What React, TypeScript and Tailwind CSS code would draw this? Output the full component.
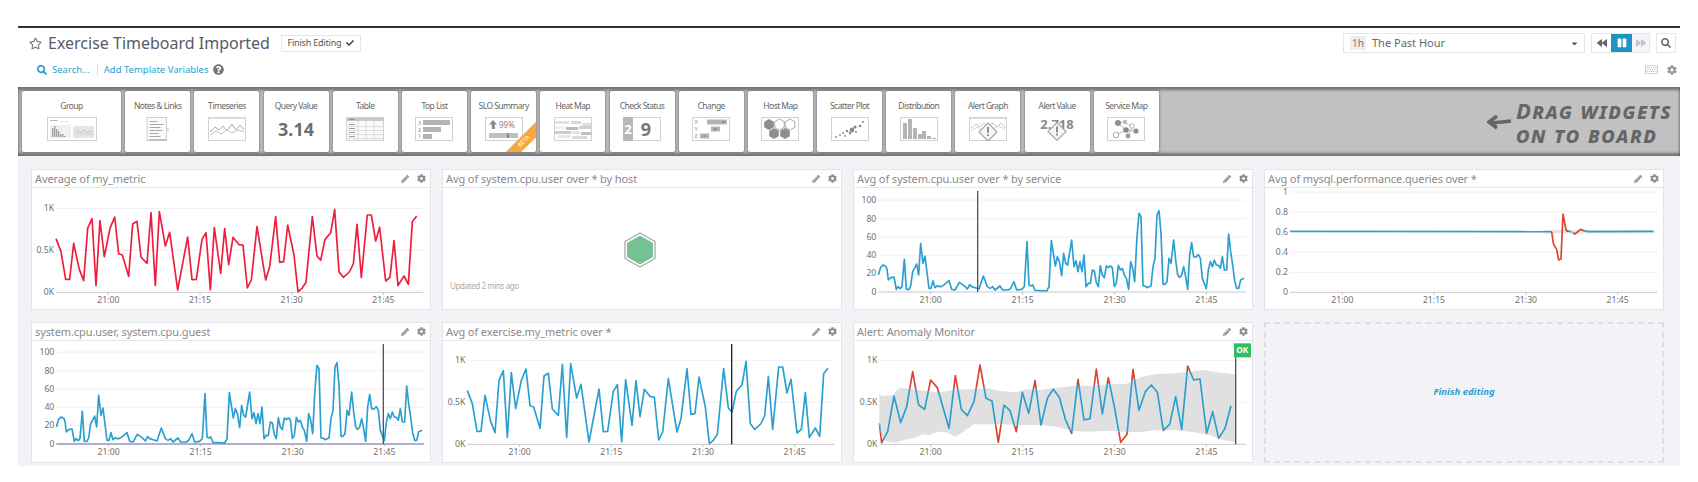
import React from "react";
import {
  FaBackward,
  FaCaretDown,
  FaCheck,
  FaCog,
  FaForward,
  FaPause,
  FaPencilAlt,
  FaQuestionCircle,
  FaRegKeyboard,
  FaRegStar,
  FaSearch,
} from "react-icons/fa";

type Pt = [number, number];

const toPoints = (pts: Pt[]) => pts.map((p) => p.join(",")).join(" ");

// traced off the reference, coordinates are 3x real pixels
const METRIC: Pt[] = [
  [168, 236], [183, 275], [197, 358], [209, 358], [221, 250], [238, 328], [251, 362], [263, 205], [276, 176], [288, 376],
  [300, 182], [313, 290], [330, 205], [344, 171], [356, 281], [367, 285], [386, 349], [398, 192], [411, 184], [423, 291],
  [441, 310], [453, 158], [466, 376], [478, 155], [496, 258], [509, 217], [533, 390], [563, 231], [576, 359], [589, 358],
  [606, 238], [618, 218], [631, 390], [643, 203], [662, 340], [674, 206], [686, 314], [699, 232], [717, 254], [729, 255],
  [742, 384], [754, 360], [771, 200], [797, 360], [809, 320], [827, 170], [839, 307], [851, 305], [863, 195], [882, 285],
  [894, 395], [906, 385], [918, 367], [937, 170], [951, 288], [962, 301], [975, 238], [992, 219], [1004, 148], [1017, 335],
  [1030, 352], [1048, 336], [1060, 312], [1071, 193], [1084, 352], [1102, 165], [1114, 165], [1127, 243], [1139, 202],
  [1157, 363], [1170, 352], [1182, 242], [1194, 377], [1212, 348], [1225, 373], [1237, 185], [1250, 168],
];

const CPU: Pt[] = [
  [115, 345], [122, 322], [130, 315], [138, 320], [141, 328], [145, 360], [152, 353], [162, 351], [169, 388], [174, 380],
  [180, 386], [186, 380], [193, 298], [199, 388], [207, 388], [212, 378], [218, 335], [225, 322], [230, 312], [236, 345],
  [242, 250], [249, 310], [255, 288], [262, 345], [267, 385], [273, 385], [279, 362], [285, 383], [292, 377], [298, 380],
  [305, 379], [313, 374], [327, 362], [335, 388], [345, 390], [358, 367], [372, 377], [382, 387], [389, 374], [395, 380],
  [408, 384], [417, 387], [430, 348], [442, 380], [450, 385], [458, 380], [465, 390], [480, 378], [488, 390], [505, 390],
  [512, 385], [522, 365], [530, 390], [545, 388], [553, 380], [561, 245], [567, 375], [573, 378], [578, 375], [585, 391],
  [620, 393], [627, 380], [634, 242], [640, 280], [646, 318], [652, 290], [658, 305], [665, 347], [671, 280], [677, 310],
  [683, 315], [695, 240], [702, 320], [708, 302], [714, 335], [720, 305], [726, 335], [732, 285], [738, 380], [745, 370],
  [751, 370], [757, 330], [763, 333], [769, 368], [775, 380], [781, 317], [787, 345], [793, 353], [799, 318], [805, 323],
  [811, 318], [817, 323], [823, 380], [829, 370], [835, 316], [841, 330], [847, 325], [853, 345], [859, 355], [866, 388],
  [872, 305], [878, 325], [884, 365], [891, 230], [897, 160], [903, 170], [909, 378], [915, 378], [921, 383], [933, 378],
  [939, 320], [945, 295], [951, 165], [957, 152], [963, 220], [969, 373], [975, 373], [981, 365], [987, 295], [993, 310],
  [1001, 240], [1007, 300], [1013, 345], [1019, 352], [1025, 345], [1031, 320], [1037, 350], [1043, 388], [1049, 285],
  [1055, 248], [1061, 290], [1067, 292], [1075, 284], [1081, 295], [1087, 355], [1099, 386], [1105, 330], [1111, 305],
  [1117, 320], [1123, 300], [1129, 315], [1135, 316], [1141, 325], [1147, 290], [1153, 330], [1160, 330], [1166, 222],
  [1172, 275], [1178, 315], [1184, 362], [1190, 385], [1196, 385], [1202, 360], [1212, 355],
];

const ANOMALY: Pt[] = [
  [118, 325], [125, 383], [143, 350], [162, 243], [182, 323], [200, 275], [218, 170], [236, 270], [254, 283], [272, 195],
  [292, 218], [327, 340], [346, 182], [364, 283], [382, 302], [402, 260], [420, 150], [438, 250], [456, 258], [475, 382],
  [492, 270], [510, 287], [529, 350], [547, 232], [566, 295], [585, 197], [603, 330], [622, 250], [640, 223], [658, 247],
  [676, 313], [695, 355], [714, 193], [732, 315], [750, 311], [769, 162], [787, 297], [805, 188], [824, 280], [842, 382],
  [861, 358], [879, 163], [897, 286], [916, 230], [934, 210], [952, 232], [970, 346], [989, 328], [1007, 245], [1025, 343],
  [1043, 153], [1061, 195], [1080, 192], [1100, 355], [1118, 290], [1136, 370], [1155, 340], [1173, 272],
];

const BAND: Pt[] = [
  [118, 233], [125, 243], [160, 240], [170, 225], [180, 218], [215, 222], [260, 228], [300, 232], [340, 225], [390, 222],
  [440, 220], [480, 228], [530, 232], [560, 222], [600, 225], [650, 218], [700, 213], [760, 212], [800, 208], [860, 207],
  [900, 187], [950, 177], [1000, 175], [1050, 170], [1090, 165], [1130, 172], [1187, 178], [1187, 382], [1150, 375],
  [1100, 358], [1050, 350], [1000, 345], [950, 345], [900, 352], [850, 350], [800, 347], [750, 350], [700, 348], [650, 335],
  [600, 330], [540, 330], [480, 328], [440, 328], [400, 328], [370, 350], [345, 365], [320, 352], [290, 350], [270, 360],
  [250, 358], [220, 370], [190, 375], [170, 383], [140, 380], [125, 365], [118, 330],
];

const BAND_PATH = `M${BAND.map((p) => p.join(" ")).join("L")}Z`;

const RED_MYSQL: Pt[] = [
  [875, 215], [880, 250], [885, 260], [890, 268], [896, 300], [903, 296], [909, 162], [918, 210], [925, 215],
];
const RED_MYSQL_2: Pt[] = [[938, 218], [945, 222], [962, 208], [970, 212]];

interface AxisProps {
  origin: Pt;
  left: number;
  right: number;
  ticks: number[];
  yLabels: [string, number][];
  baseY: number;
  children: React.ReactNode;
}

const Chart = ({ origin, left, right, ticks, yLabels, baseY, children }: AxisProps) => {
  return (
    <svg
      viewBox={`${origin[0]} ${origin[1]} 1194 363`}
      className="block h-[121px] w-[398px] overflow-visible"
      fontFamily="'Noto Sans', sans-serif"
      fontSize="26"
      fill="#707070"
    >
      {yLabels.map(([label, y]) => (
        <g key={label}>
          {y !== baseY && <line x1={left} x2={right} y1={y} y2={y} stroke="#f0f0f2" strokeWidth="3" />}
          <text x={left - 6} y={y + 9} textAnchor="end">
            {label}
          </text>
        </g>
      ))}
      <line x1={left} x2={right} y1={baseY} y2={baseY} stroke="#c8c8cc" strokeWidth="3" />
      {ticks.map((x, i) => (
        <g key={x}>
          <line x1={x} x2={x} y1={baseY} y2={baseY + 7} stroke="#bbb" strokeWidth="3" />
          <text x={x} y={baseY + 33} textAnchor="middle">
            {["21:00", "21:15", "21:30", "21:45"][i]}
          </text>
        </g>
      ))}
      {children}
    </svg>
  );
};

const Line = ({ pts, color }: { pts: Pt[]; color: string }) => (
  <polyline points={toPoints(pts)} fill="none" stroke={color} strokeWidth="5" strokeLinejoin="round" />
);

const Cursor = ({ x, y1, y2, color = "#555" }: { x: number; y1: number; y2: number; color?: string }) => (
  <line x1={x} x2={x} y1={y1} y2={y2} stroke={color} strokeWidth="4" />
);

const Panel = ({ title, children }: { title: string; children: React.ReactNode }) => {
  return (
    <div className="h-[141px] border border-[#e3e3e8] bg-white">
      <div className="flex h-[18px] items-center justify-between border-b border-[#e6e6ea] pl-[3px] pr-[4px]">
        <span className="text-[11px] leading-[17px] tracking-[-0.1px] text-[#8a8a8a]">{title}</span>
        <div className="flex items-center gap-[8px] text-[#8c8c8c]">
          <FaPencilAlt className="h-[8px] w-[8px]" />
          <FaCog className="h-[9px] w-[9px]" />
        </div>
      </div>
      {children}
    </div>
  );
};

const K_LABELS: [string, number][] = [
  ["1K", 145],
  ["0.5K", 271],
  ["0K", 397],
];
const K_LABELS_ALERT: [string, number][] = [
  ["1K", 136],
  ["0.5K", 262],
  ["0K", 388],
];
const PCT_LABELS: [string, number][] = [
  ["100", 120],
  ["80", 176],
  ["60", 231],
  ["40", 286],
  ["20", 340],
  ["0", 396],
];

const G = "#b4b4b4";
const FRAME = "#d2d2d2";

const Box = ({ children, w = 38 }: { children: React.ReactNode; w?: number }) => (
  <svg viewBox={`0 0 ${w} 24`} width={w} height={24} fontFamily="'Noto Sans', sans-serif">
    {children}
  </svg>
);

const Frame = ({ w = 38 }: { w?: number }) => (
  <rect x="0.5" y="0.5" width={w - 1} height="23" fill="#fff" stroke={FRAME} />
);

const Diamond = ({ cx, cy }: { cx: number; cy: number }) => (
  <g>
    <polygon
      points={`${cx},${cy - 9} ${cx + 9},${cy} ${cx},${cy + 9} ${cx - 9},${cy}`}
      fill="#f6f6f6"
      stroke="#a8a8a8"
      strokeWidth="1.2"
    />
    <rect x={cx - 0.8} y={cy - 5} width="1.6" height="6" fill="#777" />
    <rect x={cx - 0.8} y={cy + 2.2} width="1.6" height="1.8" fill="#777" />
  </g>
);

const hexPoints = (cx: number, cy: number, r: number) =>
  [0, 1, 2, 3, 4, 5]
    .map((i) => {
      const a = (Math.PI / 3) * i + Math.PI / 6;
      return `${(cx + r * Math.cos(a)).toFixed(1)},${(cy + r * Math.sin(a)).toFixed(1)}`;
    })
    .join(" ");

const GroupIcon = () => (
  <Box w={50}>
    <Frame w={50} />
    <rect x="3" y="3" width="8" height="1" fill="#bbb" />
    <rect x="13" y="4" width="8" height="0.8" fill="#ddd" />
    <rect x="3" y="8" width="21" height="13" fill="#f0f0f0" />
    <rect x="26" y="9" width="21" height="12" fill="#e6e6e6" />
    {[[5, 9], [7, 11], [9, 8], [11, 6], [13, 3], [15, 3], [17, 1]].map(([x, h]) => (
      <rect key={x} x={x} y={20 - h} width="1.4" height={h} fill="#a2a2a2" />
    ))}
    <polyline points="28,16 31,13 34,16 37,13 40,16 43,14 46,15" fill="none" stroke="#c2c2c2" />
    <polyline points="28,18 31,16 34,18 37,16 40,18 43,17 46,17" fill="none" stroke="#cfcfcf" />
  </Box>
);

const NotesIcon = () => (
  <Box w={24}>
    <rect x="1" y="0.5" width="19.5" height="23" fill="#fafafa" stroke="#cfcfcf" />
    <rect x="3" y="22" width="18" height="1.5" fill="#bbb" />
    <polygon points="20.5,11 23,12.5 20.5,14" fill="#fff" stroke="#bbb" strokeWidth="0.7" />
    {[[4, 8], [7, 14], [10, 11], [13, 13], [16, 9], [19, 11]].map(([y, w]) => (
      <rect key={y} x="3.5" y={y} width={w} height="1" fill="#a9a9a9" />
    ))}
  </Box>
);

const TimeseriesIcon = () => (
  <Box>
    <Frame />
    <rect x="0.5" y="0.5" width="37" height="1.5" fill="#ddd" />
    <polyline points="2,15 7,10 11,13 15,9 19,14 24,7 28,13 32,8 36,13" fill="none" stroke="#aaa" />
    <polyline points="2,18 8,14 13,17 19,13 24,16 30,13 36,15" fill="none" stroke="#c2c2c2" />
  </Box>
);

const TableIcon = () => (
  <Box>
    <rect x="0.5" y="0.5" width="37" height="23" fill="#fafafa" stroke={FRAME} />
    <rect x="1" y="1" width="36" height="3" fill="#c8c8c8" />
    <rect x="3" y="1.8" width="6" height="1" fill="#888" />
    {[8, 12, 16, 20].map((y) => (
      <g key={y}>
        <rect x="3" y={y - 1} width="6" height="1" fill="#9c9c9c" />
        <line x1="1" x2="37" y1={y + 1.5} y2={y + 1.5} stroke="#dcdcdc" />
      </g>
    ))}
    {[12, 20, 28].map((x) => (
      <line key={x} x1={x} x2={x} y1="4" y2="23" stroke="#dcdcdc" />
    ))}
  </Box>
);

const TopListIcon = () => (
  <Box>
    <Frame />
    <g fontSize="5.5" fill="#888">
      <text x="3" y="7.5">3</text>
      <text x="3" y="14.5">2</text>
      <text x="3" y="21">1</text>
    </g>
    <rect x="8" y="3" width="27" height="5" fill={G} />
    <rect x="8" y="10" width="18" height="5" fill={G} />
    <rect x="8" y="17" width="9" height="5" fill={G} />
  </Box>
);

const SloIcon = () => (
  <Box>
    <Frame />
    <polygon points="6,3 10,7.5 7.8,7.5 7.8,12 4.8,12 4.8,7.5 2,7.5" fill="#8a8a8a" transform="translate(2 0)" />
    <text x="14" y="11" fontSize="8" fill="#888">99%</text>
    <rect x="4" y="16" width="29" height="5" fill="#c0c0c0" />
    <rect x="22" y="16" width="1.5" height="5" fill="#777" />
  </Box>
);

const HeatIcon = () => (
  <Box>
    <Frame />
    {[[1, 4, 14, "#e2e2e2"], [17, 4, 10, "#d6d6d6"], [28, 6, 9, "#ddd"], [1, 9, 10, "#eee"], [12, 10, 12, "#bbb"], [25, 9, 12, "#d0d0d0"], [1, 14, 16, "#ccc"], [18, 14, 8, "#e4e4e4"], [27, 15, 10, "#bfbfbf"], [4, 18, 12, "#e6e6e6"], [18, 19, 15, "#dadada"]].map(([x, y, w, c], i) => (
      <rect key={i} x={x as number} y={y as number} width={w as number} height="3" fill={c as string} />
    ))}
  </Box>
);

const CheckIcon = () => (
  <Box>
    <Frame />
    <rect x="0" y="0" width="10" height="24" fill="#b9b9b9" />
    <text x="5" y="17" textAnchor="middle" fontSize="13" fontWeight="700" fill="#fff">2</text>
    <text x="23" y="18.5" textAnchor="middle" fontSize="18" fontWeight="700" fill="#777">9</text>
  </Box>
);

const ChangeIcon = () => (
  <Box>
    <Frame />
    <g fontSize="5.5" fill="#888">
      <text x="2.5" y="7">X</text>
      <text x="2.5" y="14">Y</text>
      <text x="2.5" y="21">Z</text>
    </g>
    <rect x="15" y="2.5" width="20" height="5" fill={G} />
    <rect x="19" y="9.5" width="9" height="5" fill={G} />
    <rect x="8" y="16.5" width="9" height="5" fill={G} />
    <rect x="30" y="4.5" width="3" height="1" fill="#666" />
    <rect x="22" y="11.5" width="3" height="1" fill="#666" />
    <rect x="11" y="18.5" width="3" height="1" fill="#888" />
  </Box>
);

const HostIcon = () => (
  <Box>
    <Frame />
    <polygon points={hexPoints(8, 7.5, 5.5)} fill="#8f8f8f" />
    <polygon points={hexPoints(18.5, 7.5, 5.5)} fill="#fff" stroke="#aaa" />
    <polygon points={hexPoints(29, 7.5, 5.5)} fill="#fff" stroke="#aaa" />
    <polygon points={hexPoints(13, 16.5, 5.5)} fill="#8f8f8f" />
    <polygon points={hexPoints(24, 16.5, 5.5)} fill="#8f8f8f" />
  </Box>
);

const ScatterIcon = () => (
  <Box>
    <Frame />
    {[[5, 20, 0.9], [9, 18, 0.9], [12, 16, 1], [14, 19, 0.9], [16, 14, 1.2], [19, 16, 1.3], [21, 13, 2.4], [24, 10, 1.6], [25, 15, 1], [29, 9, 1.3], [32, 5, 1.1]].map(([x, y, r], i) => (
      <circle key={i} cx={x} cy={y} r={r} fill="#8a8a8a" />
    ))}
  </Box>
);

const DistributionIcon = () => (
  <Box>
    <Frame />
    {[[3, 16], [8, 20], [13, 11], [18, 5], [22, 8], [27, 3], [32, 1]].map(([x, h]) => (
      <rect key={x} x={x} y={22 - h} width="4" height={h} fill={G} />
    ))}
  </Box>
);

const AlertGraphIcon = () => (
  <Box>
    <Frame />
    <rect x="0.5" y="0.5" width="37" height="1.5" fill="#ddd" />
    <polyline points="2,11 7,7 11,10 15,6 19,10 24,6 28,10 32,6 36,11" fill="none" stroke="#c4c4c4" />
    <polyline points="2,14 8,10 13,13 19,9 24,12 30,9 36,13" fill="none" stroke="#d4d4d4" />
    <Diamond cx={19} cy={15} />
  </Box>
);

const AlertValueIcon = () => (
  <svg viewBox="0 0 38 24" width={38} height={24} className="overflow-visible" fontFamily="'Noto Sans', sans-serif">
    <text x="19" y="12" textAnchor="middle" fontSize="13" fontWeight="700" fill="#8a8a8a">2.718</text>
    <Diamond cx={19} cy={14.5} />
  </svg>
);

const ServiceIcon = () => (
  <Box>
    <Frame />
    <g stroke="#aaa" strokeWidth="0.8">
      <line x1="11" y1="6" x2="17" y2="5" />
      <line x1="11" y1="6" x2="19" y2="13" />
      <line x1="17" y1="5" x2="25" y2="10" />
      <line x1="19" y1="13" x2="9" y2="18" />
      <line x1="19" y1="13" x2="29" y2="14" />
      <line x1="25" y1="10" x2="21" y2="19" />
    </g>
    <circle cx="11" cy="6" r="3" fill="#8f8f8f" />
    <circle cx="18" cy="5" r="2.2" fill="#bbb" />
    <circle cx="25" cy="9" r="2.2" fill="#fff" stroke="#999" strokeWidth="0.8" />
    <circle cx="19" cy="13" r="2.8" fill="#8a8a8a" />
    <circle cx="9" cy="18" r="2.8" fill="#fff" stroke="#999" strokeWidth="0.8" />
    <circle cx="21" cy="19" r="2.4" fill="#999" />
    <circle cx="29" cy="14" r="2.6" fill="#8f8f8f" />
  </Box>
);

const WIDGETS: { label: string; icon: React.ReactNode; wide?: boolean; beta?: boolean }[] = [
  { label: "Group", icon: <GroupIcon />, wide: true },
  { label: "Notes & Links", icon: <NotesIcon /> },
  { label: "Timeseries", icon: <TimeseriesIcon /> },
  {
    label: "Query Value",
    icon: <span className="text-[18px] font-bold leading-[24px] text-[#6e6e6e]">3.14</span>,
  },
  { label: "Table", icon: <TableIcon /> },
  { label: "Top List", icon: <TopListIcon /> },
  { label: "SLO Summary", icon: <SloIcon />, beta: true },
  { label: "Heat Map", icon: <HeatIcon /> },
  { label: "Check Status", icon: <CheckIcon /> },
  { label: "Change", icon: <ChangeIcon /> },
  { label: "Host Map", icon: <HostIcon /> },
  { label: "Scatter Plot", icon: <ScatterIcon /> },
  { label: "Distribution", icon: <DistributionIcon /> },
  { label: "Alert Graph", icon: <AlertGraphIcon /> },
  { label: "Alert Value", icon: <AlertValueIcon /> },
  { label: "Service Map", icon: <ServiceIcon /> },
];

const WidgetCard = ({ label, icon, wide, beta }: (typeof WIDGETS)[number]) => {
  return (
    <div
      className={`relative flex h-[61px] flex-col items-center overflow-hidden rounded-[2px] bg-white pt-[8px] shadow-[0_0_3px_rgba(0,0,0,0.55)] ${
        wide ? "w-[99px]" : "w-[65px]"
      }`}
    >
      <span className="h-[13px] whitespace-nowrap text-[8.5px] leading-[13px] tracking-[-0.55px] text-[#666]">
        {label}
      </span>
      <div className="mt-[5px] flex h-[24px] items-center justify-center">{icon}</div>
      {beta && (
        <span className="absolute bottom-[5px] right-[-14px] w-[52px] -rotate-45 bg-[#f6a83c] text-center text-[6px] leading-[11px] text-white">
          BETA
        </span>
      )}
    </div>
  );
};

export default function App() {
  return (
    <div className="h-[482px] w-[1698px] overflow-hidden bg-white px-[18px] pt-[26px] font-['Noto_Sans',sans-serif]">
      <div className="h-[61px] border-t-2 border-[#333]">
        <div className="flex items-start justify-between pl-[11px] pr-[4px] pt-[5px]">
          <div className="flex items-center">
            <FaRegStar className="h-[13px] w-[13px] text-[#777]" />
            <h1 className="ml-[6px] text-[16px] leading-[20px] text-[#555b66]">Exercise Timeboard Imported</h1>
            <button className="ml-[11px] flex h-[17px] w-[80px] items-center justify-center gap-[5px] border border-[#e6e6e6] text-[9px] tracking-[-0.2px] text-[#555]">
              Finish Editing
              <FaCheck className="h-[8px] w-[8px] text-[#444]" />
            </button>
          </div>
          <div className="flex items-center">
            <div className="flex h-[20px] w-[242px] items-center border border-[#e6e6e6] pl-[6px] pr-[5px]">
              <span className="flex h-[14px] w-[16px] items-center justify-center bg-[#eee] text-[10px] text-[#777]">
                1h
              </span>
              <span className="ml-[6px] flex-1 text-[11px] text-[#666]">The Past Hour</span>
              <FaCaretDown className="h-[9px] w-[9px] text-[#555]" />
            </div>
            <div className="ml-[6px] flex h-[20px] w-[59px] border border-[#e6e6e6]">
              <div className="flex w-[19px] items-center justify-center">
                <FaBackward className="h-[10px] w-[10px] text-[#666]" />
              </div>
              <div className="flex w-[21px] items-center justify-center bg-[#1c94c4]">
                <FaPause className="h-[10px] w-[10px] text-white" />
              </div>
              <div className="flex flex-1 items-center justify-center bg-[#f5f5f7]">
                <FaForward className="h-[10px] w-[10px] text-[#c4c4cc]" />
              </div>
            </div>
            <div className="ml-[6px] flex h-[20px] w-[20px] items-center justify-center border border-[#e6e6e6]">
              <FaSearch className="h-[10px] w-[10px] text-[#666]" />
            </div>
          </div>
        </div>
        <div className="mt-[10px] flex items-center justify-between pl-[19px] pr-[3px]">
          <div className="flex items-center text-[9.5px] leading-[12px] text-[#2a9fd0]">
            <FaSearch className="h-[10px] w-[10px] text-[#1c94c4]" />
            <span className="ml-[5px]">Search...</span>
            <span className="ml-[7px] h-[12px] w-px bg-[#ddd]" />
            <span className="ml-[6px]">Add Template Variables</span>
            <FaQuestionCircle className="ml-[5px] h-[11px] w-[11px] text-[#777]" />
          </div>
          <div className="flex items-center gap-[9px]">
            <FaRegKeyboard className="h-[13px] w-[13px] text-[#c4c4c4]" />
            <FaCog className="h-[10px] w-[10px] text-[#999]" />
          </div>
        </div>
      </div>

      <div className="flex h-[69px] items-center justify-between bg-[#c1c1c1] pl-[4px] pr-[8px] shadow-[inset_0_3px_3px_rgba(0,0,0,0.4),inset_0_-3px_3px_rgba(0,0,0,0.4)]">
        <div className="flex gap-[4.2px]">
          {WIDGETS.map((w) => (
            <WidgetCard key={w.label} {...w} />
          ))}
        </div>
        <div className="flex items-center gap-[4px] text-[#666]">
          <svg width="25" height="16" viewBox="0 0 25 16">
            <path d="M24 7 L5 9 M10 2 L2 8 L10 14" fill="none" stroke="#666" strokeWidth="3.5" />
          </svg>
          <div className="text-[22px] font-bold italic leading-[24px] tracking-[1.4px] [font-variant:small-caps]">
            <div>Drag widgets</div>
            <div>on to board</div>
          </div>
        </div>
      </div>

      <div className="grid h-[310px] grid-cols-[repeat(4,400px)] content-start gap-x-[11px] gap-y-[12px] bg-[#f3f2f6] pl-[13px] pt-[13px]">
        <Panel title="Average of my_metric">
          <Chart origin={[96, 84]} left={168} right={1270} ticks={[325, 600, 875, 1150]} yLabels={K_LABELS} baseY={397}>
            <Line pts={METRIC} color="#ee1c3d" />
          </Chart>
        </Panel>

        <Panel title="Avg of system.cpu.user over * by host">
          <div className="flex h-[121px] flex-col pt-[44px]">
            <svg width="32" height="36" viewBox="0 0 32 36" className="ml-[181px] block">
              <polygon points="16,1 31,9.5 31,26.5 16,35 1,26.5 1,9.5" fill="#fff" stroke="#8c8c8c" strokeWidth="1" />
              <polygon points="16,3.5 29,11 29,25 16,32.5 3,25 3,11" fill="#76c193" />
            </svg>
            <span className="ml-[7px] mt-[12px] text-[8px] leading-[12px] tracking-[-0.4px] text-[#aaa]">
              Updated 2 mins ago
            </span>
          </div>
        </Panel>

        <Panel title="Avg of system.cpu.user over * by service">
          <Chart origin={[42, 84]} left={115} right={1218} ticks={[272, 548, 824, 1099]} yLabels={PCT_LABELS} baseY={396}>
            <Line pts={CPU} color="#2b9fd0" />
            <Cursor x={413} y1={93} y2={396} />
          </Chart>
        </Panel>

        <Panel title="Avg of mysql.performance.queries over *">
          <Chart
            origin={[15, 84]}
            left={90}
            right={1192}
            ticks={[247, 522, 798, 1073]}
            yLabels={[
              ["1", 96],
              ["0.8", 155],
              ["0.6", 215],
              ["0.4", 277],
              ["0.2", 337],
              ["0", 397],
            ]}
            baseY={397}
          >
            <rect x="850" y="210" width="335" height="10" fill="#e6e6e6" />
            <Line pts={[[90, 214], [876, 215]]} color="#3a9cc6" />
            <Line pts={[[918, 212], [935, 216]]} color="#3a9cc6" />
            <Line pts={[[968, 211], [985, 215], [1180, 214]]} color="#3a9cc6" />
            <Line pts={RED_MYSQL} color="#d9432f" />
            <Line pts={RED_MYSQL_2} color="#d9432f" />
          </Chart>
        </Panel>

        <Panel title="system.cpu.user, system.cpu.guest">
          <Chart origin={[42, 87]} left={115} right={1218} ticks={[272, 548, 824, 1099]} yLabels={PCT_LABELS} baseY={396}>
            <line x1="115" x2="1218" y1="396" y2="396" stroke="#a09cc8" strokeWidth="4" />
            <Line pts={CPU} color="#2b9fd0" />
            <Cursor x={1096} y1={96} y2={396} />
          </Chart>
        </Panel>

        <Panel title="Avg of exercise.my_metric over *">
          <Chart origin={[95, 87]} left={168} right={1270} ticks={[325, 600, 875, 1150]} yLabels={K_LABELS} baseY={397}>
            <Line pts={METRIC} color="#2b9fd0" />
            <Cursor x={961} y1={96} y2={397} color="#222" />
          </Chart>
        </Panel>

        <Panel title="Alert: Anomaly Monitor">
          <Chart origin={[42, 78]} left={118} right={1218} ticks={[272, 548, 824, 1099]} yLabels={K_LABELS_ALERT} baseY={388}>
            <defs>
              <clipPath id="inside-band">
                <path d={BAND_PATH} />
              </clipPath>
              <clipPath id="outside-band">
                <path d={`M0 0H1400V500H0Z${BAND_PATH}`} clipRule="evenodd" />
              </clipPath>
            </defs>
            <path d={BAND_PATH} fill="#e0e0e0" />
            <g clipPath="url(#outside-band)">
              <Line pts={ANOMALY} color="#d9432f" />
            </g>
            <g clipPath="url(#inside-band)">
              <Line pts={ANOMALY} color="#2b9fd0" />
            </g>
            <Cursor x={1187} y1={127} y2={388} />
            <rect x="1182" y="85" width="51" height="42" fill="#2dbe60" />
            <text x="1207" y="115" textAnchor="middle" fontSize="25" fontWeight="700" fill="#fff">
              OK
            </text>
          </Chart>
        </Panel>

        <div className="flex h-[141px] items-center justify-center border-2 border-dashed border-[#dfdfe3]">
          <span className="text-[9.5px] font-bold italic text-[#2a9fd0]">Finish editing</span>
        </div>
      </div>
    </div>
  );
}
